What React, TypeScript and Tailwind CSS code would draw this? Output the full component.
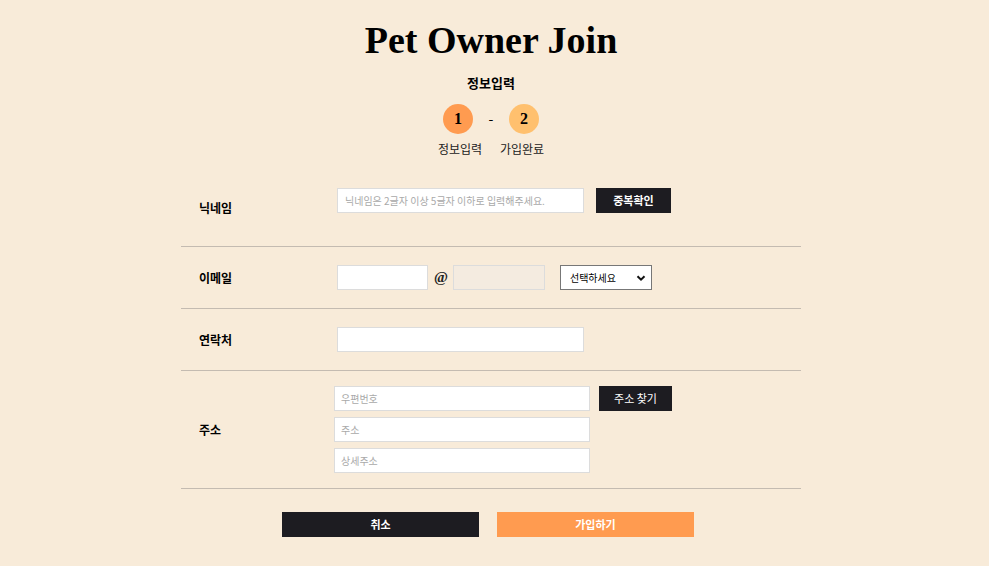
import React from "react";

const kr = { fontFamily: '"Noto Sans CJK KR", "Noto Sans", sans-serif' };
const serif = { fontFamily: '"Liberation Serif", "DejaVu Serif", serif' };

export default function App() {
  return (
    <div className="min-h-[566px] w-full bg-[#f8ebd9] text-black" style={kr}>
      <div className="w-[982px]">
        <div className="flex flex-col items-center pt-[18px]">
          <h1 className="text-[38px] leading-[44px] font-bold tracking-[0px]" style={serif}>
            Pet Owner Join
          </h1>
          <div className="mt-[12px] text-[13px] leading-[18px] font-bold">정보입력</div>
          <div className="mt-[12px] flex items-center">
            <div className="flex flex-col items-center w-[46px]">
              <div className="w-[30px] h-[30px] rounded-full bg-[#ff9b50] flex items-center justify-center text-[16px] font-bold" style={serif}>1</div>
            </div>
            <div className="w-[20px] text-center text-[14px] -mt-[2px]">-</div>
            <div className="flex flex-col items-center w-[46px]">
              <div className="w-[30px] h-[30px] rounded-full bg-[#ffc06e] flex items-center justify-center text-[16px] font-bold" style={serif}>2</div>
            </div>
          </div>
          <div className="mt-[7px] flex text-[12px] leading-[16px] text-[#222]">
            <span className="w-[48px] text-center">정보입력</span>
            <span className="w-[14px]"></span>
            <span className="w-[48px] text-center">가입완료</span>
          </div>
        </div>

        <div className="mx-auto w-[620px] mt-[13px]">
          {/* nickname */}
          <div className="flex items-center h-[77px] border-b border-[#c4bbb1]">
            <div className="w-[156px] pl-[18px] text-[12px] font-bold">닉네임</div>
            <div className="flex flex-col self-start pt-[18px]">
              <div className="flex items-center">
                <input
                  className="w-[247px] h-[25px] bg-white border border-[#dcdcdc] px-[7px] text-[10px] outline-none placeholder:text-[#a9a9a9]"
                  placeholder="닉네임은 2글자 이상 5글자 이하로 입력해주세요."
                  style={kr}
                />
                <button className="ml-[12px] w-[75px] h-[25px] bg-[#1d1c21] text-white text-[11px] font-bold" style={kr}>중복확인</button>
              </div>
            </div>
          </div>
          {/* email */}
          <div className="flex items-center h-[62px] border-b border-[#c4bbb1]">
            <div className="w-[156px] pl-[18px] text-[12px] font-bold">이메일</div>
            <div className="flex items-center">
              <input className="w-[91px] h-[25px] bg-white border border-[#dcdcdc] outline-none" />
              <span className="ml-[6px] mr-[5px] text-[15px] font-bold text-[#222]" style={serif}>@</span>
              <input disabled className="w-[92px] h-[25px] bg-[#f4ebe0] border border-[#dcdcdc] outline-none" />
              <div className="ml-[15px] w-[92px] h-[25px] bg-white border border-[#777] flex items-center justify-between pl-[9px] pr-[5px] text-[10px]">
                <span>선택하세요</span>
                <svg width="10" height="10" viewBox="0 0 10 10"><path d="M1.5 3.2 L5 6.7 L8.5 3.2" fill="none" stroke="#111" strokeWidth="2" /></svg>
              </div>
            </div>
          </div>
          {/* phone */}
          <div className="flex items-center h-[62px] border-b border-[#c4bbb1]">
            <div className="w-[156px] pl-[18px] text-[12px] font-bold">연락처</div>
            <input className="w-[247px] h-[25px] bg-white border border-[#dcdcdc] outline-none" />
          </div>
          {/* address */}
          <div className="flex items-center h-[118px] border-b border-[#c4bbb1]">
            <div className="w-[153px] pl-[18px] text-[12px] font-bold">주소</div>
            <div className="flex flex-col gap-[6px]">
              <div className="flex items-center">
                <input className="w-[256px] h-[25px] bg-white border border-[#dcdcdc] px-[6px] text-[10px] outline-none placeholder:text-[#a9a9a9]" placeholder="우편번호" style={kr} />
                <button className="ml-[9px] w-[73px] h-[25px] bg-[#1d1c21] text-white text-[11px]" style={kr}>주소 찾기</button>
              </div>
              <input className="w-[256px] h-[25px] bg-white border border-[#dcdcdc] px-[6px] text-[10px] outline-none placeholder:text-[#a9a9a9]" placeholder="주소" style={kr} />
              <input className="w-[256px] h-[25px] bg-white border border-[#dcdcdc] px-[6px] text-[10px] outline-none placeholder:text-[#a9a9a9]" placeholder="상세주소" style={kr} />
            </div>
          </div>
          <div className="flex gap-[18px] mt-[23px] pl-[101px]">
            <button className="w-[197px] h-[25px] bg-[#1d1c21] text-white text-[11px] font-bold" style={kr}>취소</button>
            <button className="w-[197px] h-[25px] bg-[#ff9b50] text-white text-[11px] font-bold" style={kr}>가입하기</button>
          </div>
        </div>
      </div>
    </div>
  );
}
